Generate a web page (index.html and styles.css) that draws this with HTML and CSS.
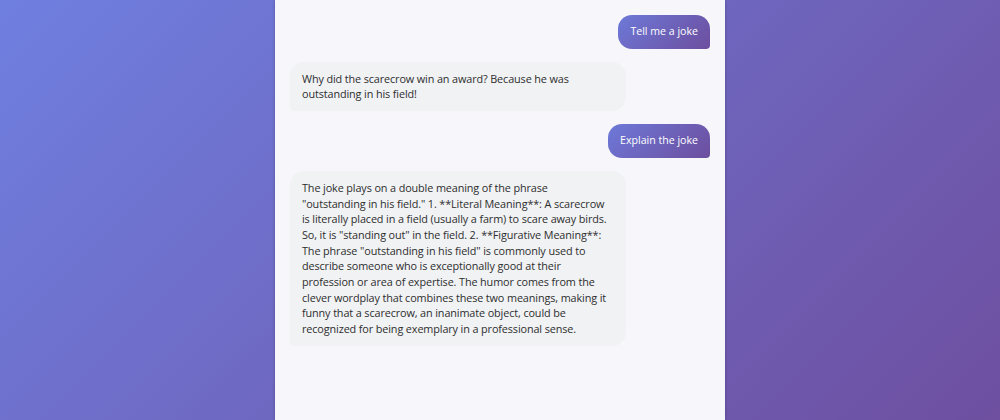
FILE: index.html
```html
<!DOCTYPE html>
<html lang="en">

<head>
    <meta charset="UTF-8">
    <meta name="viewport" content="width=device-width, initial-scale=1.0">
    <title>Chat</title>
    <link rel="stylesheet" href="styles.css">
</head>

<body>
    <div class="container">
        <div class="messages">
            <div class="message user">Tell me a joke</div>
            <div class="message bot">Why did the scarecrow win an award? Because he was outstanding in his field!</div>
            <div class="message user">Explain the joke</div>
            <div class="message bot">The joke plays on a double meaning of the phrase "outstanding&nbsp;in his field." 1. **Literal Meaning**: A scarecrow is literally placed in a field (usually a farm) to scare away birds. So, it is "standing out" in the field. 2. **Figurative Meaning**: The phrase "outstanding in his field" is commonly used to describe someone who is exceptionally good at their profession or area of expertise. The humor comes from the clever wordplay that combines these two meanings, making it funny that a scarecrow, an inanimate object, could be recognized for being exemplary in a professional sense.</div>
        </div>
    </div>
</body>

</html>
```

FILE: styles.css
```css
body {
    font-family: "Open Sans", "Noto Sans", sans-serif;
    margin: 0;
    padding: 0;
    height: 100vh;
    display: flex;
    justify-content: center;
    background: linear-gradient(135deg, #6f7fe0 0%, #6e4fa0 100%);
}

.container {
    width: 450px;
    height: 100%;
    background-color: #f7f7fb;
    box-shadow: 0 0 3px rgba(0, 0, 0, 0.25);
}

.messages {
    display: flex;
    flex-direction: column;
    gap: 13px;
    padding: 15px;
}

.message {
    box-sizing: border-box;
    max-width: 336px;
    font-size: 10.6px;
    line-height: 15.7px;
    padding: 9px 12px;
    border-radius: 14px;
}

.user {
    align-self: flex-end;
    color: white;
    background: linear-gradient(135deg, #6d79d8 0%, #6d4e9e 100%);
    border-bottom-right-radius: 4px;
}

.bot {
    align-self: flex-start;
    font-size: 10.85px;
    letter-spacing: -0.12px;
    color: #2e2e2e;
    background-color: #f1f2f4;
    border-bottom-left-radius: 4px;
}
```
